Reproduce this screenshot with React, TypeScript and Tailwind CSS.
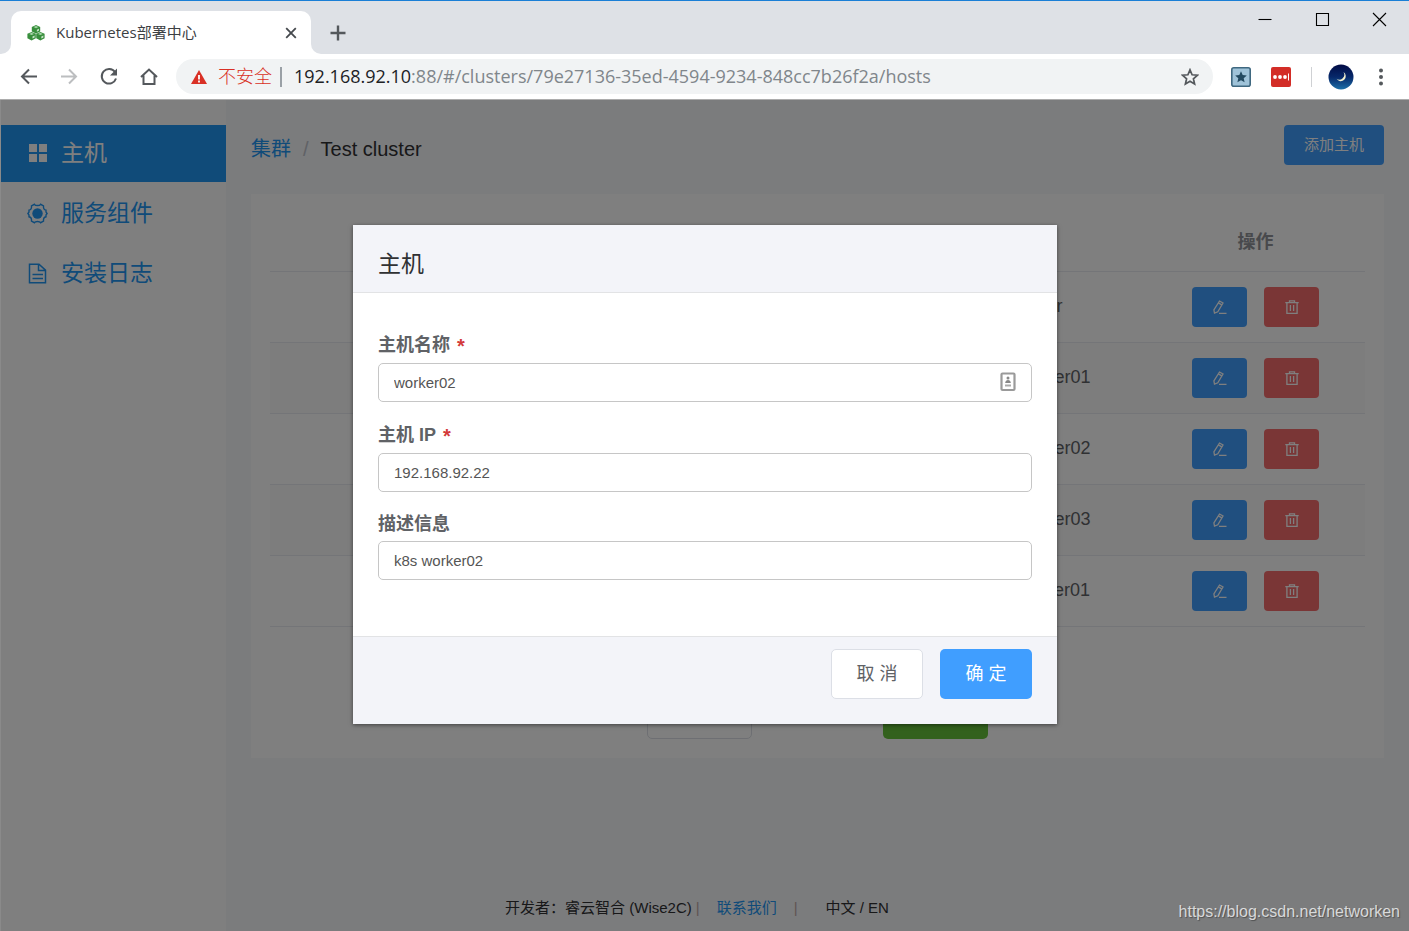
import { useState } from "react";
import type { ReactNode } from "react";

type Host = {
  id: number;
  name: string;
  ip: string;
  description: string;
};

const hosts: Host[] = [
  { id: 1, name: "harbor", ip: "192.168.92.13", description: "harbor" },
  { id: 2, name: "master01", ip: "192.168.92.11", description: "k8s master01" },
  { id: 3, name: "master02", ip: "192.168.92.12", description: "k8s master02" },
  { id: 4, name: "master03", ip: "192.168.92.14", description: "k8s master03" },
  { id: 5, name: "worker01", ip: "192.168.92.21", description: "k8s worker01" },
];

const CubesIcon = () => (
  <svg viewBox="0 0 18 16" className="h-4 w-[18px]">
    {[
      [9, 4.2],
      [4.6, 11],
      [13.4, 11],
    ].map(([x, y]) => (
      <g key={`${x}-${y}`} transform={`translate(${x} ${y})`}>
        <path d="M0-4.1 4.2-2.2V2.2L0 4.4-4.2 2.2v-4.4z" fill="#388e3c" />
        <path d="M0-3.2 2.4-2.1 0-1-2.4-2.1z" fill="#a5d6a7" />
        <path d="M.9.6 3-.5v1.9L.9 2.6z" fill="#c8e6c9" />
      </g>
    ))}
  </svg>
);

const GridIcon = () => (
  <svg viewBox="0 0 21 21" className="h-[21px] w-[21px]" fill="currentColor">
    <path d="M2 1h8v8H2zM12 1h8v8h-8zM2 11h8v8H2zM12 11h8v8h-8z" />
  </svg>
);

const GearIcon = () => (
  <svg viewBox="0 0 21 21" className="h-[21px] w-[21px]" fill="none" stroke="currentColor" strokeWidth="1.4">
    <path d="M7.4 1.3c1 1.6 5.200 1.600 6.200 0l2.900 1.600c-.2 2.200.9 4 2.500 4.300v1.800l1.100 1.500-1.100 1.500v1.800c-1.600.3-2.700 2.100-2.500 4.300l-2.900 1.600c-1-1.600-5.200-1.600-6.200 0l-2.900-1.600c.2-2.200-.9-4-2.500-4.300V12L.9 10.500 2 9V7.200c1.600-.3 2.700-2.100 2.500-4.300z" />
    <circle cx="10.5" cy="10.5" r="5.2" fill="currentColor" stroke="none" />
  </svg>
);

const DocIcon = () => (
  <svg viewBox="0 0 21 21" className="h-[21px] w-[21px]" fill="none" stroke="currentColor" strokeWidth="1.5">
    <path d="M2.500 1.200h9.500l6.500 6V19.800h-16zM11.500 1.500v6h6.500M5.500 11.500h10.500M5.500 15.500h10.500" />
  </svg>
);

const EditIcon = () => (
  <svg viewBox="0 0 14 14" className="h-[14px] w-[14px]" fill="none" stroke="currentColor" strokeWidth="1.3">
    <path d="M6.500 1 10 3 4.800 11.800 1.500 13.100.9 9.800zM5.400 2.900l3.400 2M6 13.300h7.500" />
  </svg>
);

const TrashIcon = () => (
  <svg viewBox="0 0 14 14" className="h-[14px] w-[14px]" fill="none" stroke="currentColor" strokeWidth="1.3">
    <path d="M.3 2.600h13.400M4.500 2.300V.8h5v1.500M1.900 2.800v10.500h10.200V2.800M5.400 5v6M8.600 5v6" />
  </svg>
);

const ContactIcon = () => (
  <svg viewBox="0 0 16 20" className="h-5 w-4">
    <rect x="1.5" y="1.5" width="13" height="16.5" rx="1" fill="#fff" stroke="#9a9a9a" strokeWidth="2.2" />
    <circle cx="8" cy="6" r="1.5" fill="#888" />
    <path d="M5.200 11c0-4 5.600-4 5.600 0z" fill="#888" />
    <path d="M5 13.500h6" stroke="#aaa" strokeWidth="2" />
  </svg>
);

function BrowserBar() {
  return (
    <header className="border-b border-[#acacac] bg-white font-['Open_Sans','Noto_Sans_CJK_SC',sans-serif]">
      <div className="flex h-[54px] items-start border-t border-[#1a7fd6] bg-[#dee1e6] pl-px">
        <div className="mt-[43px] h-[10px] w-[10px] bg-white">
          <div className="h-full rounded-br-[10px] bg-[#dee1e6]" />
        </div>
        <div className="mt-[10px] flex h-[43px] w-[300px] items-center rounded-t-[10px] bg-white pr-[10px] pl-4">
          <CubesIcon />
          <span className="ml-[11px] flex-1 text-[15px] text-[#3c4043]">Kubernetes部署中心</span>
          <button aria-label="关闭标签页" className="p-1">
            <svg viewBox="0 0 12 12" className="h-3 w-3" stroke="#45494d" strokeWidth="1.8">
              <path d="M1.200 1.200l9.600 9.600M10.800 1.200 1.200 10.800" />
            </svg>
          </button>
        </div>
        <div className="mt-[43px] h-[10px] w-[10px] bg-white">
          <div className="h-full rounded-bl-[10px] bg-[#dee1e6]" />
        </div>
        <button aria-label="新标签页" className="mt-6 ml-[9px]">
          <svg viewBox="0 0 16 16" className="h-4 w-4" stroke="#54585c" strokeWidth="2.4">
            <path d="M8 .5v15M.5 8h15" />
          </svg>
        </button>
        <div className="mt-[11px] mr-[23px] ml-auto flex gap-[43px]">
          {[
            { label: "最小化", path: "M.5 7.500h13" },
            { label: "最大化", path: "M1.500 1.500h12v12h-12z" },
            { label: "关闭", path: "M1 1l13 13M14 1 1 14" },
          ].map((item) => (
            <button key={item.label} aria-label={item.label}>
              <svg viewBox="0 0 14 14" className="h-[14px] w-[14px] overflow-visible" fill="none" stroke="#000" strokeWidth="1.1">
                <path d={item.path} />
              </svg>
            </button>
          ))}
        </div>
      </div>

      <div className="flex h-[45px] items-center pr-[23px] pl-[19px]">
        <div className="flex gap-5 text-[#54585c]">
          {[
            { label: "后退", path: "M18 9.500H3M10 2.500 3 9.500l7 7" },
            { label: "前进", path: "M2 9.500H17M10 2.500l7 7-7 7" },
            { label: "刷新", path: "M16 5A7.300 7.300 0 1 0 17 11.500" },
            { label: "主页", path: "M2 10 10 2.500l8 7.500M4.500 8.500V17h11V8.500" },
          ].map((item) => (
            <button key={item.label} aria-label={item.label} className={item.label === "前进" ? "text-[#bcbec0]" : ""}>
              <svg viewBox="0 0 20 20" className="h-5 w-5" fill="none" stroke="currentColor" strokeWidth="2">
                <path d={item.path} />
                {item.label === "刷新" && <path d="M18 1.500v7h-7z" fill="currentColor" stroke="none" />}
              </svg>
            </button>
          ))}
        </div>
        <div className="ml-[17px] flex h-[35px] flex-1 items-center rounded-full bg-[#f1f3f4] px-[14px] text-[18px]">
          <svg viewBox="0 0 18 16" className="h-4 w-[18px]">
            <path d="M9 1 17 15H1z" fill="#d93025" />
            <path d="M9 6v4.500M9 11.500v2" stroke="#fff" strokeWidth="1.8" />
          </svg>
          <span className="ml-[10px] font-light text-[#d93025]">不安全</span>
          <span className="mr-3 ml-2 h-5 w-[2px] bg-[#9aa0a6]" />
          <span className="flex-1 whitespace-nowrap text-[#80868b]">
            <span className="text-[#202124]">192.168.92.10</span>
            :88/#/clusters/79e27136-35ed-4594-9234-848cc7b26f2a/hosts
          </span>
          <button aria-label="收藏">
            <svg viewBox="0 0 18 18" className="h-[18px] w-[18px]" fill="none" stroke="#54585c" strokeWidth="1.7">
              <path d="M9 1.800l2.100 5 5.400.4-4.100 3.600 1.200 5.300L9 13.300l-4.600 2.800 1.200-5.300-4.100-3.600 5.400-.4z" />
            </svg>
          </button>
        </div>
        <svg viewBox="0 0 20 20" className="ml-[18px] h-5 w-5">
          <rect x=".8" y=".8" width="18.4" height="18.4" rx="2" fill="#9fc3d9" stroke="#3f6880" strokeWidth="1.6" />
          <path d="M10 4.300l1.700 3.800 4.100.4-3.100 2.700.9 4.100-3.600-2.100-3.600 2.100.9-4.100-3.100-2.700 4.100-.4z" fill="#234a61" />
        </svg>
        <svg viewBox="0 0 20 20" className="ml-5 h-5 w-5">
          <rect width="20" height="20" rx="2" fill="#d32d27" />
          <g fill="#fff">
            <circle cx="4" cy="10" r="1.9" />
            <circle cx="9" cy="10" r="1.9" />
            <circle cx="14" cy="10" r="1.9" />
            <path d="M17 6.500h1v7h-1z" />
          </g>
        </svg>
        <span className="ml-5 h-5 w-px bg-[#cfd1d4]" />
        <svg viewBox="0 0 26 26" className="mr-[22px] ml-4 h-[26px] w-[26px]">
          <defs>
            <linearGradient id="night" x1="0" y1="0" x2="0" y2="1">
              <stop offset="0" stopColor="#020b45" />
              <stop offset=".5" stopColor="#06286a" />
              <stop offset="1" stopColor="#1c6fa8" />
            </linearGradient>
          </defs>
          <circle cx="13" cy="13" r="12.5" fill="url(#night)" />
          <path d="M15.500 8a5 5 0 0 1-7 6.800A5 5 0 1 0 15.500 8z" fill="#f3f0d0" />
        </svg>
        <button aria-label="菜单">
          <svg viewBox="0 0 10 18" className="h-[18px] w-[10px]" fill="#54585c">
            <circle cx="5" cy="2.5" r="2" />
            <circle cx="5" cy="9" r="2" />
            <circle cx="5" cy="15.5" r="2" />
          </svg>
        </button>
      </div>
    </header>
  );
}

function MenuItem({ icon, label, active }: { icon: ReactNode; label: string; active?: boolean }) {
  return (
    <a
      href="#"
      className={`flex h-[57px] items-center gap-[13px] pl-[26px] text-[23px] ${
        active ? "bg-[#2196f3] text-white" : "text-[#2196f3]"
      }`}
    >
      {icon}
      {label}
    </a>
  );
}

function HostTable() {
  return (
    <table className="w-full table-fixed text-center text-[18px] text-[#606266]">
      <thead>
        <tr className="h-[57px] border-b border-[#e8eaf0] text-[#909399]">
          {["#", "主机", "IP", "描述", "操作"].map((header) => (
            <th key={header} className={header === "#" ? "text-transparent" : ""}>
              {header}
            </th>
          ))}
        </tr>
      </thead>
      <tbody>
        {hosts.map((host) => (
          <tr key={host.id} className="h-[71px] border-b border-[#e8eaf0] even:bg-[#fafafa]">
            <td />
            <td>{host.name}</td>
            <td>{host.ip}</td>
            <td>{host.description}</td>
            <td>
              <div className="flex justify-center gap-[17px] text-white">
                <button aria-label="编辑" className="flex h-10 w-[55px] items-center justify-center rounded bg-[#409eff]">
                  <EditIcon />
                </button>
                <button aria-label="删除" className="flex h-10 w-[55px] items-center justify-center rounded bg-[#f56c6c]">
                  <TrashIcon />
                </button>
              </div>
            </td>
          </tr>
        ))}
      </tbody>
    </table>
  );
}

type FieldProps = {
  id: string;
  label: string;
  value: string;
  required?: boolean;
  icon?: ReactNode;
  onChange: (value: string) => void;
};

function Field({ id, label, value, required, icon, onChange }: FieldProps) {
  return (
    <div>
      <label
        htmlFor={id}
        className={`mb-1 flex items-center gap-[7px] text-[18px] font-bold text-[#606266] ${required ? "h-[28px]" : "h-[26px]"}`}
      >
        {label}
        {required && <span className="pt-[2px] text-[20px] leading-5 text-[#d33a3a]">*</span>}
      </label>
      <div className="relative">
        <input
          id={id}
          type="text"
          value={value}
          onChange={(e) => onChange(e.target.value)}
          className="h-[39px] w-full rounded-[5px] border border-[#c6c6c6] bg-white px-[15px] text-[15px] text-[#555]"
        />
        {icon && <span className="absolute top-[9px] right-4">{icon}</span>}
      </div>
    </div>
  );
}

function HostDialog() {
  const [name, setName] = useState("worker02");
  const [ip, setIp] = useState("192.168.92.22");
  const [description, setDescription] = useState("k8s worker02");

  return (
    <div className="absolute inset-0 flex items-start justify-center bg-black/50 pt-[125px]">
      <div role="dialog" aria-labelledby="dialog-title" className="w-1/2 bg-white shadow-[0_1px_4px_rgba(0,0,0,0.5)]">
        <h2
          id="dialog-title"
          className="border-b border-[#e2e3e5] bg-[#f3f4f9] px-[25px] pt-[25px] pb-[14px] text-[23px] leading-7 text-[#303133]"
        >
          主机
        </h2>
        <form className="flex flex-col gap-[19px] px-[25px] pt-[38px] pb-14">
          <Field id="name" label="主机名称" value={name} onChange={setName} required icon={<ContactIcon />} />
          <Field id="ip" label="主机 IP" value={ip} onChange={setIp} required />
          <Field id="description" label="描述信息" value={description} onChange={setDescription} />
        </form>
        <div className="flex justify-end gap-[17px] border-t border-[#e2e3e5] bg-[#f3f4f9] px-[25px] pt-3 pb-[25px] text-[18px]">
          <button className="h-[50px] w-[92px] rounded-[5px] border border-[#dcdfe6] bg-white text-[#606266]">取 消</button>
          <button className="h-[50px] w-[92px] rounded-[5px] bg-[#409eff] text-white">确 定</button>
        </div>
      </div>
    </div>
  );
}

export default function App() {
  return (
    <div className="flex min-h-screen flex-col font-['Liberation_Sans','Noto_Sans_CJK_SC',sans-serif]">
      <BrowserBar />
      <div className="relative flex flex-1 border-l border-[#8a8a8a] bg-[#f6f8fb]">
        <nav className="flex w-[225px] shrink-0 flex-col gap-[3px] bg-white pt-[25px]">
          <MenuItem icon={<GridIcon />} label="主机" active />
          <MenuItem icon={<GearIcon />} label="服务组件" />
          <MenuItem icon={<DocIcon />} label="安装日志" />
        </nav>

        <main className="flex flex-1 flex-col px-[25px] pt-[25px]">
          <div className="flex items-center justify-between">
            <div className="flex items-center gap-3 pt-2 text-[20px] text-[#303133]">
              <a href="#" className="text-[#2196f3]">
                集群
              </a>
              <span className="text-[#c0c4cc]">/</span>
              <span>Test cluster</span>
            </div>
            <button className="h-10 w-[100px] rounded bg-[#409eff] text-[15px] text-white">添加主机</button>
          </div>

          <section className="mt-[29px] bg-white px-[19px] pt-5 pb-[19px]">
            <HostTable />
            <div className="mt-[62px] flex justify-center gap-[131px] text-[18px]">
              <button className="h-[50px] w-[105px] rounded-[5px] border border-[#dcdfe6] text-[#606266]">返回</button>
              <button className="h-[50px] w-[105px] rounded-[5px] bg-[#67c23a] text-white">下一步</button>
            </div>
          </section>

          {/* footer is centered on the whole page, not on the main column */}
          <footer className="mt-auto -ml-[225px] flex items-center justify-center pb-[11px] text-[15px] leading-6 text-[#303133]">
            <span>开发者：睿云智合 (Wise2C)</span>
            <span className="ml-1 text-[#c0a8a8]">|</span>
            <a href="#" className="mx-[17px] text-[#2196f3]">
              联系我们
            </a>
            <span className="text-[#c0a8a8]">|</span>
            <a href="#" className="mr-4 ml-7">
              中文 / EN
            </a>
          </footer>
        </main>

        <HostDialog />
        <span className="absolute right-[9px] bottom-[7px] text-[16px] text-white/75 [text-shadow:1px_1px_1px_rgba(0,0,0,0.35)]">
          https://blog.csdn.net/networken
        </span>
      </div>
    </div>
  );
}
